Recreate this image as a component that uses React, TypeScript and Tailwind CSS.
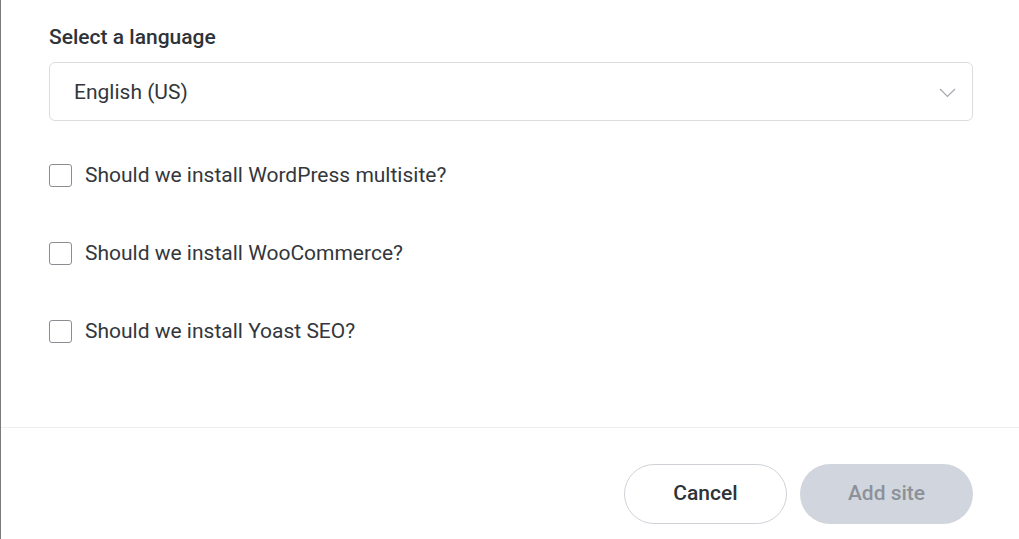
const options = [
  "Should we install WordPress multisite?",
  "Should we install WooCommerce?",
  "Should we install Yoast SEO?",
];

export default function App() {
  return (
    <div className="h-[539px] w-[1019px] overflow-hidden bg-white border-l border-[#7a7a7a] font-['Roboto',sans-serif] text-[#2e3338]">
      <div className="pl-12 pr-[46px] pt-[24px]">
        <label className="block text-[21px] font-medium leading-[26px]">Select a language</label>
        <div className="mt-[12px] flex h-[59px] items-center justify-between rounded-md border border-[#dcdcdc] pl-[24px] pr-[16px]">
          <span className="mt-[2px] text-[21px] text-[#33373c]">English (US)</span>
          <svg width="17" height="10" viewBox="0 0 17 10" fill="none" className="mt-[2px]">
            <polyline points="1,1 8.5,8.5 16,1" stroke="#a4a8ad" strokeWidth="1.2" />
          </svg>
        </div>
        <div className="mt-[43px] flex flex-col gap-[56px]">
          {options.map((o) => (
            <label key={o} className="flex h-[22px] items-center gap-[13px]">
              <span className="h-[23px] w-[23px] rounded-[3px] border border-[#8a8e93] bg-white" />
              <span className="text-[21px] leading-[22px] text-[#33373c]">{o}</span>
            </label>
          ))}
        </div>
      </div>
      <div className="mt-[85px] border-t border-[#eeeeee]" />
      <div className="flex justify-end gap-[13px] pr-[46px] pt-[36px]">
        <button className="h-[60px] w-[163px] rounded-full border border-[#cfd3d8] bg-white text-[21px] font-medium text-[#2e3338]">
          Cancel
        </button>
        <button className="h-[60px] w-[173px] rounded-full bg-[#d1d6de] text-[21px] font-medium text-[#8c9199]">
          Add site
        </button>
      </div>
    </div>
  );
}
